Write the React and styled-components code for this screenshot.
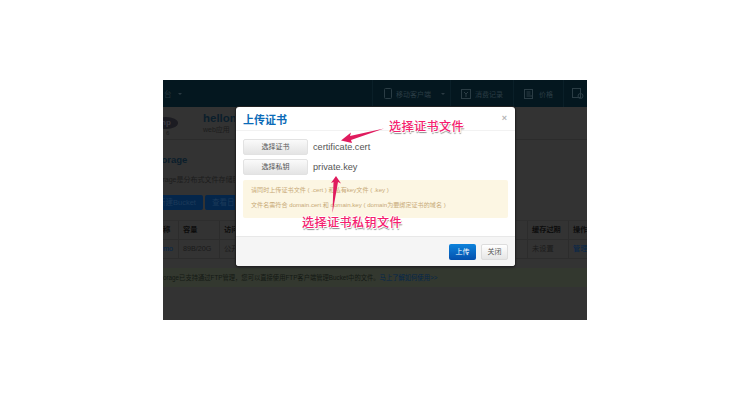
import React from "react";
import styled, { createGlobalStyle } from "styled-components";

const Global = createGlobalStyle`
  html, body { margin: 0; padding: 0; background: #fff; }
  body { width: 750px; height: 400px; overflow: hidden; font-family: "Liberation Sans", "Noto Sans CJK SC", sans-serif; }
`;
const Stage = styled.div`
  width: 750px; height: 400px; padding: 80px 163px; box-sizing: border-box; background: #fff;
`;
const Shot = styled.div`
  position: relative; width: 424px; height: 240px; overflow: hidden; background: #333; color: #111;
`;
const Nav = styled.div`
  height: 27px; background: #04171f; display: flex; align-items: center; color: #22343c; font-size: 7.5px;
`;
const NavBrand = styled.div`
  width: 26px; display: flex; align-items: center; padding-left: 1px; box-sizing: border-box;
`;
const NavCaret = styled.span`
  width: 0; height: 0; border: 2px solid transparent; border-top: 2px solid #2a3a42; border-bottom: 0; margin-left: ${p => p.$gap || 6}px;
`;
const NavRight = styled.div`
  margin-left: auto; display: flex; align-items: center; height: 100%;
`;
const NavItem = styled.div`
  display: flex; align-items: center; gap: 4px; width: ${p => p.$w}px; padding-left: ${p => p.$pad}px; box-sizing: border-box; height: 100%; border-left: 1px solid #0a1f28; color: #2b3d45; font-size: 7px; white-space: nowrap;
`;
const NavIcon = styled.svg`
  flex: none; stroke: #2b3d45; fill: none; stroke-width: 1;
`;
const Head = styled.div`
  height: 33px; box-sizing: border-box; display: flex; align-items: center; border-bottom: 1px solid #2c2c2c; padding-left: 40px; position: relative;
`;
const PhpLogo = styled.div`
  position: absolute; left: -9px; top: 10px; width: 24px; height: 12px; border-radius: 50%; background: #1c1c22; color: #3a3a42; font-size: 8px; font-weight: 700; text-align: center; line-height: 12px;
`;
const PhpVersion = styled.div`
  position: absolute; left: 3px; top: 22px; font-size: 6px; line-height: 8px; color: #1c1c1c;
`;
const AppName = styled.div`
  font-size: 11.5px; font-weight: 700; color: #0b1e2b; line-height: 13px;
`;
const AppSub = styled.div`
  font-size: 7px; color: #1c1c1c; line-height: 9px;
`;
const Section = styled.div`
  padding: 13px 0 0 0; margin-left: -11px;
`;
const Title = styled.div`
  font-size: 9.5px; font-weight: 700; color: #0b1e2b; line-height: 14px;
`;
const Desc = styled.div`
  font-size: 7px; color: #1c1c1c; margin-top: 8px; line-height: 9px; white-space: nowrap;
`;
const BtnRow = styled.div`
  display: flex; gap: 2px; margin: 11px 0 0 0;
`;
const BlueBtn = styled.div`
  height: 15px; box-sizing: border-box; width: ${p => p.$w}px; padding-left: ${p => p.$pad}px; background: #04264b; border-radius: 2px; color: #1c3a5a; font-size: 7.5px; line-height: 15px; white-space: nowrap;
`;
const Table = styled.div`
  display: grid; grid-template-columns: 16px 41px 308px 41px 1fr; margin-top: 10px; grid-auto-rows: 19px; font-size: 7.2px; color: #111; border-top: 1px solid #2e2e2e;
`;
const Cell = styled.div`
  box-sizing: border-box; padding-left: ${p => (p.$first ? 0 : 4)}px; line-height: 18px; white-space: nowrap; border-bottom: 1px solid #2c2c2c; border-right: 1px solid #2c2c2c;
  font-weight: ${p => (p.$h ? 700 : 400)};
  color: ${p => (p.$link ? "#04264b" : p.$h ? "#0c0c0c" : "#1a1a1a")};
`;
const Notice = styled.div`
  height: 19px; margin-top: 9px; background: #33382f; color: #141814; font-size: 6.3px; line-height: 19px; white-space: nowrap;
`;
const NoticeLink = styled.span`
  color: #04264b;
`;
const Modal = styled.div`
  position: absolute; left: 73px; top: 27px; width: 279px; height: 159px; background: #fff; border-radius: 3px; box-shadow: 0 0 0 1px #222, 0 1px 3px rgba(0,0,0,.6); display: flex; flex-direction: column; overflow: hidden;
`;
const ModalHead = styled.div`
  height: 24px; box-sizing: border-box; border-bottom: 1px solid #f2f2f2; display: flex; align-items: center; justify-content: space-between; padding: 0 8px 0 7px; flex: none;
`;
const ModalTitle = styled.div`
  font-size: 11px; font-weight: 700; color: #0b6bb8;
`;
const Close = styled.div`
  font-size: 9px; color: #b5b5b5; font-weight: 700; line-height: 9px;
`;
const ModalBody = styled.div`
  flex: 1; padding: 8px 7px 0 7px; display: flex; flex-direction: column; gap: 4px;
`;
const FileRow = styled.div`
  display: flex; align-items: center; height: 16px; gap: 5px;
`;
const GrayBtn = styled.div`
  width: 65px; height: 16px; box-sizing: border-box; border: 1px solid #e2e2e2; border-radius: 2px; background: linear-gradient(#fafafa, #e4e4e4); font-size: 7px; color: #555; text-align: center; line-height: 14px; flex: none;
`;
const FileName = styled.div`
  font-size: 9.2px; color: #555;
`;
const Alert = styled.div`
  margin-top: 1px; height: 38px; box-sizing: border-box; padding: 2px 8px 0 8px; background: #fcf6e3; border-radius: 2px; color: #c8aa78; font-size: 6.1px; line-height: 15px; white-space: nowrap;
`;
const ModalFoot = styled.div`
  height: 30px; flex: none; background: #f5f5f5; border-top: 1px solid #e8e8e8; box-sizing: border-box; display: flex; justify-content: flex-end; align-items: center; gap: 5px; padding: 0 7px 0 0;
`;
const Primary = styled.div`
  width: 27px; height: 16px; border-radius: 2px; background: linear-gradient(#0d83dc, #0450ad); color: #fff; font-size: 7px; text-align: center; line-height: 16px;
`;
const Secondary = styled.div`
  width: 27px; height: 16px; box-sizing: border-box; border: 1px solid #ddd; border-radius: 2px; background: linear-gradient(#fff, #e6e6e6); color: #555; font-size: 7px; text-align: center; line-height: 14px;
`;
const Note = styled.div`
  position: absolute; left: ${p => p.$x}px; top: ${p => p.$y}px; font-family: "Noto Sans CJK SC", serif; font-size: 12px; line-height: 14px; font-weight: 500; color: #f5206e; white-space: nowrap; letter-spacing: .5px;
  text-shadow: 1px 1px 0 #fff, -1px 0 0 #fff, 0 -1px 0 #fff, 1px 2px 1px #888;
`;
const Arrows = styled.svg`
  position: absolute; left: 0; top: 0; pointer-events: none;
`;

export default function App() {
  return (
    <Stage>
      <Global />
      <Shot>
        <Nav>
          <NavBrand>台<NavCaret /></NavBrand>
          <NavRight>
            <NavItem $w={78} $pad={11}>
              <NavIcon width="8" height="11" viewBox="0 0 8 11"><rect x=".5" y=".5" width="7" height="10" rx="1" /></NavIcon>
              移动客户端<NavCaret />
            </NavItem>
            <NavItem $w={63} $pad={10}>
              <NavIcon width="10" height="10" viewBox="0 0 10 10"><rect x=".5" y=".5" width="9" height="9" /><path d="M3 3l2 2 2-2M5 5v3" /></NavIcon>
              消费记录
            </NavItem>
            <NavItem $w={50} $pad={10}>
              <NavIcon width="11" height="10" viewBox="0 0 11 10"><rect x=".5" y=".5" width="8" height="9" /><path d="M2.500 3h4M2.500 5h4M2.500 7h6" /></NavIcon>
              价格
            </NavItem>
            <NavItem $w={24} $pad={8}>
              <NavIcon width="12" height="11" viewBox="0 0 12 11"><rect x=".5" y=".5" width="8" height="9" /><circle cx="8.500" cy="8" r="2.500" /></NavIcon>
            </NavItem>
          </NavRight>
        </Nav>
        <Head>
          <PhpLogo>hp</PhpLogo>
          <PhpVersion>6</PhpVersion>
          <div>
            <AppName>hellom</AppName>
            <AppSub>web应用</AppSub>
          </div>
        </Head>
        <Section>
          <Title>Storage</Title>
          <Desc>Storage是分布式文件存储服务</Desc>
          <BtnRow>
            <BlueBtn $w={51} $pad={6}>新建Bucket</BlueBtn>
            <BlueBtn $w={40} $pad={7}>查看日志</BlueBtn>
          </BtnRow>
        </Section>
        <Table>
          <Cell $h $first>称</Cell><Cell $h>容量</Cell><Cell $h>访问</Cell><Cell $h>缓存过期</Cell><Cell $h>操作</Cell>
          <Cell $link $first>mo</Cell><Cell>89B/20G</Cell><Cell>公开</Cell><Cell>未设置</Cell><Cell $link>管理</Cell>
        </Table>
        <Notice>orage已支持通过FTP管理，您可以直接使用FTP客户端管理Bucket中的文件。<NoticeLink>马上了解如何使用&gt;&gt;</NoticeLink></Notice>
        <Modal>
          <ModalHead>
            <ModalTitle>上传证书</ModalTitle>
            <Close>×</Close>
          </ModalHead>
          <ModalBody>
            <FileRow><GrayBtn>选择证书</GrayBtn><FileName>certificate.cert</FileName></FileRow>
            <FileRow><GrayBtn>选择私钥</GrayBtn><FileName>private.key</FileName></FileRow>
            <Alert>
              <div>请同时上传证书文件 ( .cert ) 和私有key文件 ( .key )</div>
              <div>文件名需符合 domain.cert 和 domain.key ( domain为要绑定证书的域名 )</div>
            </Alert>
          </ModalBody>
          <ModalFoot>
            <Primary>上传</Primary>
            <Secondary>关闭</Secondary>
          </ModalFoot>
        </Modal>
        <Arrows width="424" height="240" viewBox="0 0 424 240">
          <path d="M178 60.500 L188 52.500 L187 56 L221 48.500 L188 60 L189 63 Z" fill="#e01b5e" />
          <path d="M173 96 L168 103 L170.500 102 L169.500 133 L175 102 L178 103.500 Z" fill="#e01b5e" />
        </Arrows>
        <Note $x={226} $y={39}>选择证书文件</Note>
        <Note $x={139} $y={135}>选择证书私钥文件</Note>
      </Shot>
    </Stage>
  );
}
